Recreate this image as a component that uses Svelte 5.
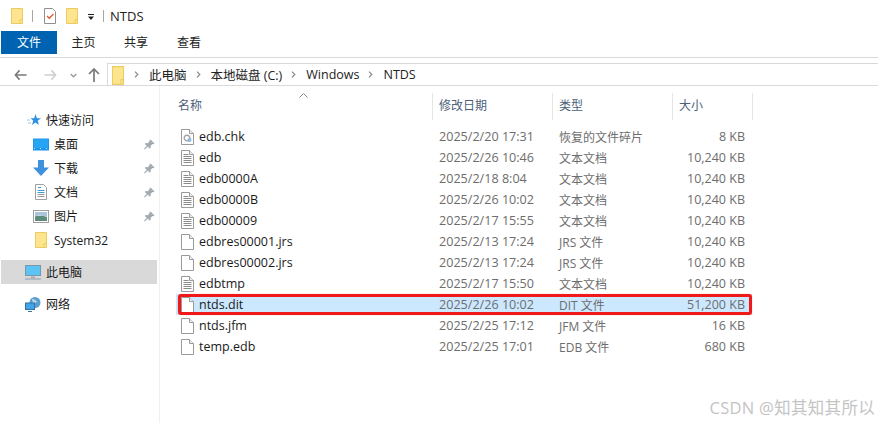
<script>
  const files = [
    { name: "edb.chk", date: "2025/2/20 17:31", type: "恢复的文件碎片", size: "8 KB", icon: "chk" },
    { name: "edb", date: "2025/2/26 10:46", type: "文本文档", size: "10,240 KB", icon: "txt" },
    { name: "edb0000A", date: "2025/2/18 8:04", type: "文本文档", size: "10,240 KB", icon: "txt" },
    { name: "edb0000B", date: "2025/2/26 10:02", type: "文本文档", size: "10,240 KB", icon: "txt" },
    { name: "edb00009", date: "2025/2/17 15:55", type: "文本文档", size: "10,240 KB", icon: "txt" },
    { name: "edbres00001.jrs", date: "2025/2/13 17:24", type: "JRS 文件", size: "10,240 KB", icon: "blank" },
    { name: "edbres00002.jrs", date: "2025/2/13 17:24", type: "JRS 文件", size: "10,240 KB", icon: "blank" },
    { name: "edbtmp", date: "2025/2/17 15:50", type: "文本文档", size: "10,240 KB", icon: "txt" },
    { name: "ntds.dit", date: "2025/2/26 10:02", type: "DIT 文件", size: "51,200 KB", icon: "blank", selected: true },
    { name: "ntds.jfm", date: "2025/2/25 17:12", type: "JFM 文件", size: "16 KB", icon: "blank" },
    { name: "temp.edb", date: "2025/2/25 17:01", type: "EDB 文件", size: "680 KB", icon: "blank" },
  ];
  const crumbs = ["此电脑", "本地磁盘 (C:)", "Windows", "NTDS"];
  const quick = [
    { label: "桌面", icon: "desktop", pin: true },
    { label: "下载", icon: "download", pin: true },
    { label: "文档", icon: "docs", pin: true },
    { label: "图片", icon: "pics", pin: true },
    { label: "System32", icon: "folder", pin: false },
  ];
</script>

{#snippet folder(w, h)}
  <svg width={w} height={h} viewBox="0 0 12 16" preserveAspectRatio="none">
    <path d="M.5.5h11v15H.5z" fill="#fde58f" stroke="#eccb5f"/>
    <path d="M9 15.500v-4h2.500" fill="none" stroke="#eccb5f"/>
  </svg>
{/snippet}

{#snippet fileIcon(kind)}
  <svg width="13" height="16" viewBox="0 0 13 16">
    <path d="M.5.5h8l4 4v11H.5z" fill="#fff" stroke="#9a9a9a"/>
    <path d="M8.500.5v4h4" fill="#eee" stroke="#9a9a9a"/>
    {#if kind === "txt"}
      <path d="M2.500 4.500h5M2.500 6.500h8M2.500 8.500h8M2.500 10.500h8M2.500 12.500h8" stroke="#8a8a8a"/>
    {:else if kind === "chk"}
      <circle cx="6" cy="9" r="2.800" fill="none" stroke="#a5a5a5" stroke-width="1.400"/>
      <circle cx="8.500" cy="11" r="2" fill="#8fb8d8"/>
    {/if}
  </svg>
{/snippet}

{#snippet pin()}
  <svg class="pin" width="11" height="11" viewBox="0 0 11 11">
    <path d="M6.500.5l4 4-1 .7-1-.2-2 2 .2 2-1 .8-1.700-2.300L.8 10.500 0 10l2.700-3.300L.8 5l.8-1 2 .2 2-2-.2-1z" fill="#a3aab0"/>
  </svg>
{/snippet}

{#snippet navIcon(kind)}
  {#if kind === "desktop"}
    <svg width="16" height="13" viewBox="0 0 16 13">
      <rect width="16" height="12" y=".5" fill="#1e95ea"/>
      <rect x="1" y="1.500" width="14" height="8.500" fill="#26a5f5"/>
      <path d="M1 10.500h14" stroke="#bde3fb" stroke-dasharray="1 5"/>
    </svg>
  {:else if kind === "download"}
    <svg width="16" height="16" viewBox="0 0 16 16">
      <path d="M5 0h6v7.500h5L8 16 0 7.500h5z" fill="#3f90dd"/>
    </svg>
  {:else if kind === "docs"}
    <svg width="12" height="16" viewBox="0 0 12 16">
      <path d="M.5.500h8l3 3v12H.5z" fill="#fff" stroke="#a0a0a0"/>
      <path d="M3 3.500h3M2.500 6.500h7M2.500 8.500h7" stroke="#3f9ad8"/>
      <path d="M2.500 10.500h7M2.500 12.500h7" stroke="#9a9a9a"/>
    </svg>
  {:else if kind === "pics"}
    <svg width="16" height="13" viewBox="0 0 16 13">
      <rect x=".5" y=".5" width="15" height="12" fill="#fff" stroke="#a0a0a0"/>
      <rect x="2" y="2" width="12" height="4" fill="#a9c6dc"/>
      <rect x="2" y="6" width="12" height="5" fill="#5e8c7a"/>
      <path d="M2 6.500c4-1.500 8-1 12 .5v-1H2z" fill="#dfe9e8"/>
    </svg>
  {:else if kind === "folder"}
    {@render folder(12, 16)}
  {/if}
{/snippet}

<div class="window">
  <div class="titlebar">
    <span class="qa folder-a">{@render folder(12, 16)}</span>
    <span class="qa-sep"></span>
    <svg class="qa-check" width="12" height="16" viewBox="0 0 12 16">
      <path d="M.5.500h8l3 3v12H.5z" fill="#fff" stroke="#8f8f8f"/>
      <path d="M3 8l2.300 2.300L9.500 6" fill="none" stroke="#e4572e" stroke-width="1.300"/>
    </svg>
    <span class="qa folder-b">{@render folder(12, 16)}</span>
    <svg class="qa-drop" width="8" height="8" viewBox="0 0 8 8">
      <path d="M1 1.500h6" stroke="#222"/>
      <path d="M1 3.500h6L4 7z" fill="#222"/>
    </svg>
    <span class="qa-sep last"></span>
    <span class="title">NTDS</span>
  </div>

  <div class="tabs">
    <div class="tab file">文件</div>
    <div class="tab home">主页</div>
    <div class="tab share">共享</div>
    <div class="tab view">查看</div>
  </div>

  <div class="navbar">
    <div class="navbtns">
      <svg class="back" width="13" height="12" viewBox="0 0 14 12"><path d="M6 1L1.500 6 6 11M2 6h11.500" fill="none" stroke="#7a7a7a" stroke-width="1.700"/></svg>
      <svg class="forward" width="13" height="12" viewBox="0 0 14 12"><path d="M8 1l4.500 5L8 11M12 6H.5" fill="none" stroke="#d0d0d0" stroke-width="1.700"/></svg>
      <svg class="recent" width="7" height="5" viewBox="0 0 7 5"><path d="M.7 1l2.800 2.800L6.300 1" fill="none" stroke="#9a9a9a" stroke-width="1.300"/></svg>
      <svg class="up" width="12" height="14" viewBox="0 0 12 14"><path d="M1 6l5-5 5 5M6 1.500V14" fill="none" stroke="#7a7a7a" stroke-width="1.700"/></svg>
    </div>
    <div class="address">
      <span class="addr-folder">{@render folder(12, 19)}</span>
      {#each crumbs as c}
        <svg class="chev" width="5" height="7" viewBox="0 0 5 7"><path d="M1 .7l2.800 2.800L1 6.300" fill="none" stroke="#8a8a8a" stroke-width="1.200"/></svg>
        <span class="crumb">{c}</span>
      {/each}
    </div>
  </div>

  <div class="main">
    <aside class="sidebar">
      <div class="nav-row quick">
        <svg width="14" height="13" viewBox="0 0 14 13"><path d="M8.500 0l1.400 4.200H14l-3.300 2.600 1.200 4.200-3.400-2.500L5 11l1.300-4.200L3.500 4.200h3.700z" fill="#2f8fe0"/><path d="M0 6h3M1 9h3" stroke="#9cc9ef"/></svg>
        <span>快速访问</span>
      </div>
      {#each quick as item}
        <div class="nav-row sub">
          <span class="nav-icon">{@render navIcon(item.icon)}</span>
          <span>{item.label}</span>
          {#if item.pin}{@render pin()}{/if}
        </div>
      {/each}
      <div class="nav-row pc">
        <svg width="16" height="15" viewBox="0 0 16 15">
          <rect x=".5" y=".5" width="15" height="10" fill="#5cc4f5" stroke="#7c96a8"/>
          <path d="M6 11.500h4v1.500H6z" fill="#a0a8b0"/>
          <path d="M0 14h16" stroke="#8a9cab"/>
        </svg>
        <span>此电脑</span>
      </div>
      <div class="nav-row net">
        <svg width="16" height="15" viewBox="0 0 16 15">
          <circle cx="10" cy="5.500" r="5.500" fill="#5d9fcf"/>
          <path d="M7 2c2 0 4 1 5 3l-4 2z" fill="#b7d9ee"/>
          <rect x=".5" y="6" width="9" height="6.500" fill="#3fa4e8" stroke="#35729f"/>
          <path d="M3 14.500h4" stroke="#35729f"/>
        </svg>
        <span>网络</span>
      </div>
    </aside>

    <section class="list">
      <div class="sort-caret">
        <svg width="9" height="5" viewBox="0 0 9 5"><path d="M.5 4.500l4-4 4 4" fill="none" stroke="#8f8f8f"/></svg>
      </div>
      <div class="head grid">
        <div class="h-name">名称</div>
        <div class="h-cell">修改日期</div>
        <div class="h-cell">类型</div>
        <div class="h-cell">大小</div>
      </div>
      <div class="rows">
        {#each files as f}
          <div class="row grid" class:selected={f.selected}>
            <div class="c-name">{@render fileIcon(f.icon)}<span>{f.name}</span></div>
            <div class="c-meta date">{f.date}</div>
            <div class="c-meta">{f.type}</div>
            <div class="c-meta size">{f.size}</div>
            {#if f.selected}<div class="highlight"></div>{/if}
          </div>
        {/each}
      </div>
    </section>
  </div>

  <div class="watermark">CSDN @知其知其所以</div>
</div>

<style>
  :global(body) {
    margin: 0;
    background: #fff;
  }

  .window {
    position: relative;
    width: 878px;
    height: 423px;
    overflow: hidden;
    background: #fff;
    color: #1a1a1a;
    font: 12px "Open Sans", "Noto Sans CJK SC", sans-serif;
  }

  svg {
    display: block;
    flex: none;
  }

  .titlebar {
    height: 31px;
    display: flex;
    align-items: center;
    padding: 0 0 0 11px;
    box-sizing: border-box;
  }

  .qa-sep {
    width: 1px;
    height: 12px;
    background: #a8a8a8;
    margin: 0 11px 0 9px;
  }

  .qa-sep.last {
    margin: 0 6px 0 8px;
  }

  .folder-b {
    margin-left: 10px;
  }

  .qa-drop {
    margin-left: 9px;
    margin-top: 2px;
  }

  .title {
    font-size: 13px;
    color: #222;
  }

  .tabs {
    height: 26px;
    display: flex;
    align-items: flex-start;
    padding-left: 1px;
    border-bottom: 1px solid #dadada;
  }

  .tab {
    height: 23px;
    line-height: 24px;
    text-align: center;
    font-size: 12px;
    color: #222;
  }

  .tab.file {
    width: 56px;
    background: #0063b1;
    color: #fff;
  }

  .tab.home {
    width: 53px;
  }

  .tab.share {
    width: 52px;
  }

  .tab.view {
    width: 54px;
  }

  .navbar {
    height: 28px;
    display: flex;
    align-items: flex-start;
    padding-top: 5px;
    box-sizing: border-box;
    border-bottom: 1px solid #dadada;
  }

  .navbtns {
    width: 107px;
    height: 22px;
    display: flex;
    align-items: center;
    padding-left: 14px;
    padding-top: 2px;
    box-sizing: border-box;
  }

  .forward {
    margin-left: 17px;
  }

  .recent {
    margin-left: 13px;
  }

  .up {
    margin-left: 11px;
  }

  .address {
    flex: 1;
    height: 22px;
    box-sizing: border-box;
    border: 1px solid #d9d9d9;
    border-right: 0;
    border-bottom: 0;
    display: flex;
    align-items: center;
    padding-left: 4px;
  }

  .addr-folder {
    margin-right: 10px;
    margin-top: 2px;
  }

  .chev {
    margin-right: 10px;
  }

  .crumb {
    margin-right: 9px;
    font-size: 12.5px;
    color: #222;
  }

  .main {
    display: grid;
    grid-template-columns: 160px 1fr;
    height: 337px;
  }

  .sidebar {
    border-right: 1px solid #f0f0f0;
    padding-top: 22px;
    box-sizing: border-box;
  }

  .nav-row {
    height: 24px;
    display: flex;
    align-items: center;
    position: relative;
    font-size: 12px;
    color: #1a1a1a;
  }

  .quick {
    padding-left: 27px;
    gap: 5px;
  }

  .sub {
    padding-left: 33px;
  }

  .nav-icon {
    width: 16px;
    display: flex;
    justify-content: center;
    margin-right: 5px;
  }

  .pin {
    position: absolute;
    left: 144px;
    top: 7px;
  }

  .pc {
    margin: 8px 2px 0 1px;
    padding-left: 24px;
    gap: 5px;
    background: #d9d9d9;
  }

  .net {
    margin-top: 8px;
    padding-left: 25px;
    gap: 5px;
  }

  .list {
    position: relative;
    font-size: 12px;
  }

  .sort-caret {
    position: absolute;
    left: 139px;
    top: 7px;
  }

  .grid {
    display: grid;
    grid-template-columns: 273px 120px 120px 80px;
  }

  .head {
    height: 27px;
    margin-top: 7px;
    color: #4c607a;
    font-size: 12px;
  }

  .h-name,
  .h-cell {
    line-height: 26px;
    padding-left: 6px;
    box-sizing: border-box;
    border-right: 1px solid #e5e5e5;
  }

  .h-name {
    padding-left: 18px;
  }

  .rows {
    padding-top: 6px;
    padding-left: 16px;
  }

  .row {
    grid-template-columns: 257px 120px 120px 79px;
    position: relative;
    height: 21px;
    align-items: center;
    width: 576px;
  }

  .row.selected {
    background: #cce8ff;
  }

  .c-name {
    display: flex;
    align-items: center;
    gap: 5px;
    padding-left: 5px;
    color: #1a1a1a;
    font-size: 12.5px;
  }

  .c-meta {
    padding-left: 6px;
    color: #6d6d6d;
  }

  .date {
    font-size: 12.6px;
  }

  .size {
    text-align: right;
    padding-right: 7px;
    font-size: 12.5px;
  }

  .highlight {
    position: absolute;
    inset: 0 0 0 2px;
    border: 3px solid #f01818;
    border-radius: 3px;
    box-shadow: 0 0 1px rgba(240, 24, 24, 0.6);
    pointer-events: none;
  }

  .watermark {
    position: absolute;
    right: 3px;
    top: 395px;
    font-size: 16.5px;
    color: #c4c4c4;
    letter-spacing: 0.3px;
  }
</style>
